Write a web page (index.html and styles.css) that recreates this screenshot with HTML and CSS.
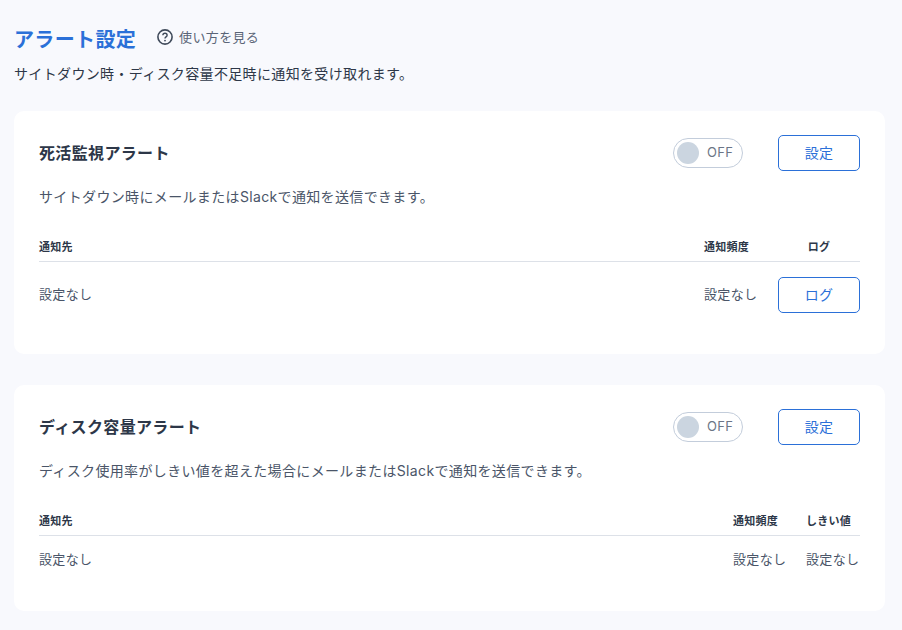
FILE: index.html
```html
<!DOCTYPE html>
<html lang="ja">
<head>
    <meta charset="UTF-8">
    <title>アラート設定</title>
    <link rel="stylesheet" href="styles.css">
</head>
<body>

<div class="page-head">
    <h1 class="page-title">アラート設定</h1>
    <a class="help-link">
        <svg class="help-icon" viewBox="0 0 16 16" width="16" height="16">
            <circle cx="8" cy="8" r="7.1" fill="none" stroke="#3f4a5a" stroke-width="1.6"/>
            <path d="M5.9 6.2C5.9 5 6.9 4.3 8 4.3c1.2 0 2.1.8 2.1 1.9 0 1.7-2.1 1.6-2.1 3.3" fill="none" stroke="#3f4a5a" stroke-width="1.4"/>
            <circle cx="8" cy="11.6" r=".9" fill="#3f4a5a"/>
        </svg>
        使い方を見る
    </a>
</div>
<p class="page-desc">サイトダウン時・ディスク容量不足時に通知を受け取れます。</p>

<section class="card card-first">
    <div class="card-head">
        <h2 class="card-title">死活監視アラート</h2>
        <div class="toggle"><span class="knob"></span><span class="toggle-label">OFF</span></div>
        <button class="button">設定</button>
    </div>
    <p class="card-desc">サイトダウン時にメールまたはSlackで通知を送信できます。</p>
    <div class="table-row table-head">
        <div class="col-main">通知先</div>
        <div class="col-freq">通知頻度</div>
        <div class="col-last col-center">ログ</div>
    </div>
    <div class="table-row table-body">
        <div class="col-main">設定なし</div>
        <div class="col-freq">設定なし</div>
        <div class="col-last"><button class="button">ログ</button></div>
    </div>
</section>

<section class="card card-second">
    <div class="card-head">
        <h2 class="card-title">ディスク容量アラート</h2>
        <div class="toggle"><span class="knob"></span><span class="toggle-label">OFF</span></div>
        <button class="button">設定</button>
    </div>
    <p class="card-desc">ディスク使用率がしきい値を超えた場合にメールまたはSlackで通知を送信できます。</p>
    <div class="table-row table-head">
        <div class="col-main">通知先</div>
        <div class="col-freq-narrow">通知頻度</div>
        <div class="col-limit">しきい値</div>
    </div>
    <div class="table-row table-body table-body-text">
        <div class="col-main">設定なし</div>
        <div class="col-freq-narrow">設定なし</div>
        <div class="col-limit">設定なし</div>
    </div>
</section>

</body>
</html>
```

FILE: styles.css
```css
* {
    box-sizing: border-box;
}

body {
    margin: 0;
    padding: 27px 17px 0 14px;
    background: #f8f9fd;
    color: #2d3748;
    font-family: "Inter", "Noto Sans CJK JP", sans-serif;
    font-size: 14px;
    letter-spacing: 0.35px;
    height: 630px;
    overflow: hidden;
}

.page-head {
    display: flex;
    align-items: center;
    height: 26px;
}

.page-title {
    margin: 0;
    font-size: 20px;
    font-weight: 700;
    color: #2b70d8;
    line-height: 26px;
}

.help-link {
    display: flex;
    align-items: center;
    gap: 6px;
    margin-left: 21px;
    margin-top: -7px;
    font-size: 13px;
    color: #5a6577;
}

.page-desc {
    margin: 10px 0 0;
    font-size: 14px;
    line-height: 22px;
    color: #2d3748;
}

.card {
    background: #fff;
    border-radius: 10px;
    padding: 24px 25px 0;
}

.card-first {
    margin-top: 26px;
    height: 243px;
}

.card-second {
    margin-top: 31px;
    height: 226px;
}

.card-head {
    display: flex;
    align-items: center;
    height: 36px;
}

.card-title {
    margin: 0;
    flex: 1;
    padding-bottom: 2px;
    font-size: 16px;
    font-weight: 700;
    color: #2d3748;
}

.toggle {
    display: flex;
    align-items: center;
    width: 70px;
    height: 30px;
    margin-right: 35px;
    padding: 0 3px;
    border: 1px solid #c3cddb;
    border-radius: 15px;
}

.knob {
    width: 22px;
    height: 22px;
    border-radius: 50%;
    background: #cbd5e0;
}

.toggle-label {
    margin-left: 8px;
    padding-bottom: 2px;
    font-size: 13px;
    color: #6b7586;
}

.button {
    width: 82px;
    height: 36px;
    padding: 0 0 3px;
    background: #fff;
    border: 1px solid #2b70d8;
    border-radius: 5px;
    color: #2b70d8;
    font-family: inherit;
    font-size: 14px;
    letter-spacing: inherit;
}

.card-desc {
    margin: 14px 0 0;
    font-size: 14px;
    line-height: 24px;
    color: #4a5568;
}

.table-row {
    display: flex;
    align-items: center;
    white-space: nowrap;
}

.table-head {
    margin-top: 25px;
    height: 28px;
    padding-bottom: 4px;
    border-bottom: 1px solid #dde1e8;
    font-size: 11px;
    letter-spacing: 0.28px;
    font-weight: 700;
    color: #2d3748;
}

.table-body {
    height: 66px;
    color: #4a5568;
    font-size: 13px;
}

.table-body-text {
    height: 48px;
}

.table-body .col-main,
.table-body .col-freq,
.table-body .col-freq-narrow,
.table-body .col-limit {
    padding-bottom: 3px;
}

.col-main {
    flex: 1;
}

.col-freq {
    width: 74px;
}

.col-last {
    width: 82px;
}

.col-center {
    text-align: center;
}

.col-freq-narrow {
    width: 73px;
}

.col-limit {
    width: 54px;
}
```
